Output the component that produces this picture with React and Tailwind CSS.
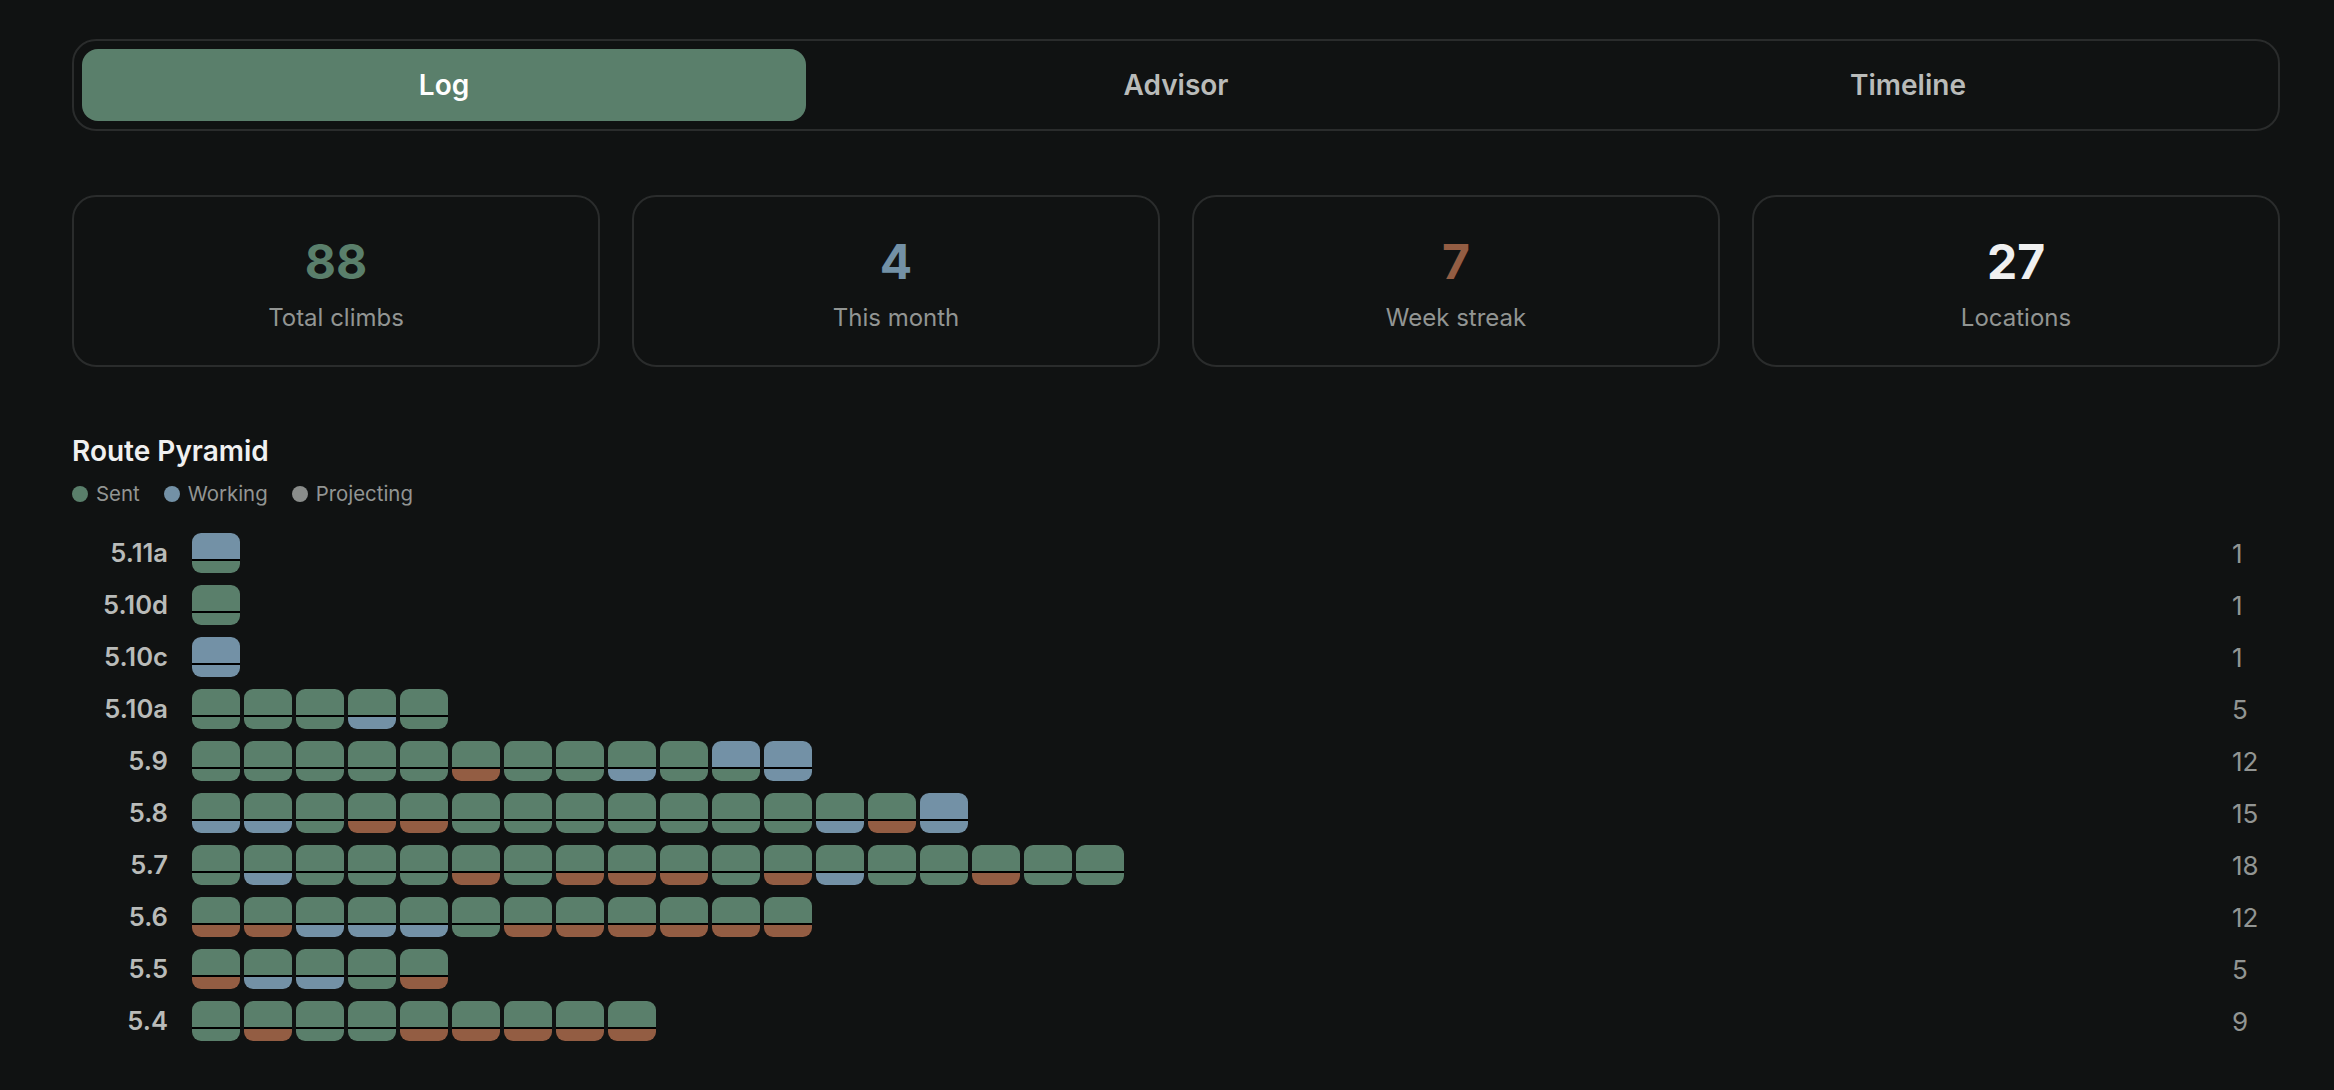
const G = "bg-[#5a7f6b]";
const B = "bg-[#7391a6]";
const R = "bg-[#935d43]";
const C = { g: G, b: B, r: R };

const rows = [
  ["5.11a", ["bg"]],
  ["5.10d", ["gg"]],
  ["5.10c", ["bb"]],
  ["5.10a", ["gg", "gg", "gg", "gb", "gg"]],
  ["5.9", ["gg", "gg", "gg", "gg", "gg", "gr", "gg", "gg", "gb", "gg", "bg", "bb"]],
  ["5.8", ["gb", "gb", "gg", "gr", "gr", "gg", "gg", "gg", "gg", "gg", "gg", "gg", "gb", "gr", "bb"]],
  ["5.7", ["gg", "gb", "gg", "gg", "gg", "gr", "gg", "gr", "gr", "gr", "gg", "gr", "gb", "gg", "gg", "gr", "gg", "gg"]],
  ["5.6", ["gr", "gr", "gb", "gb", "gb", "gg", "gr", "gr", "gr", "gr", "gr", "gr"]],
  ["5.5", ["gr", "gb", "gb", "gg", "gr"]],
  ["5.4", ["gg", "gr", "gg", "gg", "gr", "gr", "gr", "gr", "gr"]],
];

const stats = [
  ["88", "Total climbs", "text-[#5a7f6b]"],
  ["4", "This month", "text-[#7391a6]"],
  ["7", "Week streak", "text-[#935d43]"],
  ["27", "Locations", "text-[#f0f0f0]"],
];

function Tile({ code }) {
  return (
    <div className="flex h-10 w-12 flex-col gap-0.5 overflow-hidden rounded-[9px] bg-black">
      <div className={`h-[26px] ${C[code[0]]}`} />
      <div className={`h-3 ${C[code[1]]}`} />
    </div>
  );
}

function Legend({ color, label }) {
  return (
    <div className="flex items-center gap-2">
      <span className={`size-4 rounded-full ${color}`} />
      <span className="text-[20.4px] leading-[30px] text-[#929593]">{label}</span>
    </div>
  );
}

export default function App() {
  return (
    <div
      className="min-h-screen bg-[#101212] pt-[39px] pr-[54px] pl-[72px]"
      style={{ fontFamily: "Inter, sans-serif" }}
    >
      <div className="grid grid-cols-3 gap-2 rounded-3xl border-2 border-[#2a2c2c] p-2">
        <div className="flex h-[72px] items-center justify-center rounded-2xl bg-[#5a7f6b] text-[28px] font-semibold text-white">
          Log
        </div>
        <div className="flex h-[72px] items-center justify-center text-[28px] font-semibold text-[#b9bbb9]">
          Advisor
        </div>
        <div className="flex h-[72px] items-center justify-center text-[28px] font-semibold text-[#b9bbb9]">
          Timeline
        </div>
      </div>

      <div className="mt-16 grid grid-cols-4 gap-8">
        {stats.map(([n, l, c]) => (
          <div
            key={l}
            className="flex h-[172px] flex-col items-center rounded-3xl border-2 border-[#2a2c2c] pt-[37px]"
          >
            <div className={`text-[48px] leading-[56px] font-bold ${c}`}>{n}</div>
            <div className="mt-3 text-2xl leading-8 text-[#929593]">{l}</div>
          </div>
        ))}
      </div>

      <h2 className="mt-[68px] text-[28px] leading-8 font-semibold text-[#f0f0f0]">Route Pyramid</h2>
      <div className="mt-3 flex gap-6">
        <Legend color={G} label="Sent" />
        <Legend color={B} label="Working" />
        <Legend color="bg-[#8a8d8b]" label="Projecting" />
      </div>

      <div className="mt-6 flex flex-col gap-3">
        {rows.map(([label, tiles]) => (
          <div key={label} className="flex h-10 items-center gap-6">
            <div className="w-24 text-right text-[25.6px] font-semibold text-[#b9bbb9]">{label}</div>
            <div className="flex flex-1 gap-1">
              {tiles.map((t, i) => (
                <Tile key={i} code={t} />
              ))}
            </div>
            <div className="w-12 text-[26px] text-[#929593]">{tiles.length}</div>
          </div>
        ))}
      </div>
    </div>
  );
}
